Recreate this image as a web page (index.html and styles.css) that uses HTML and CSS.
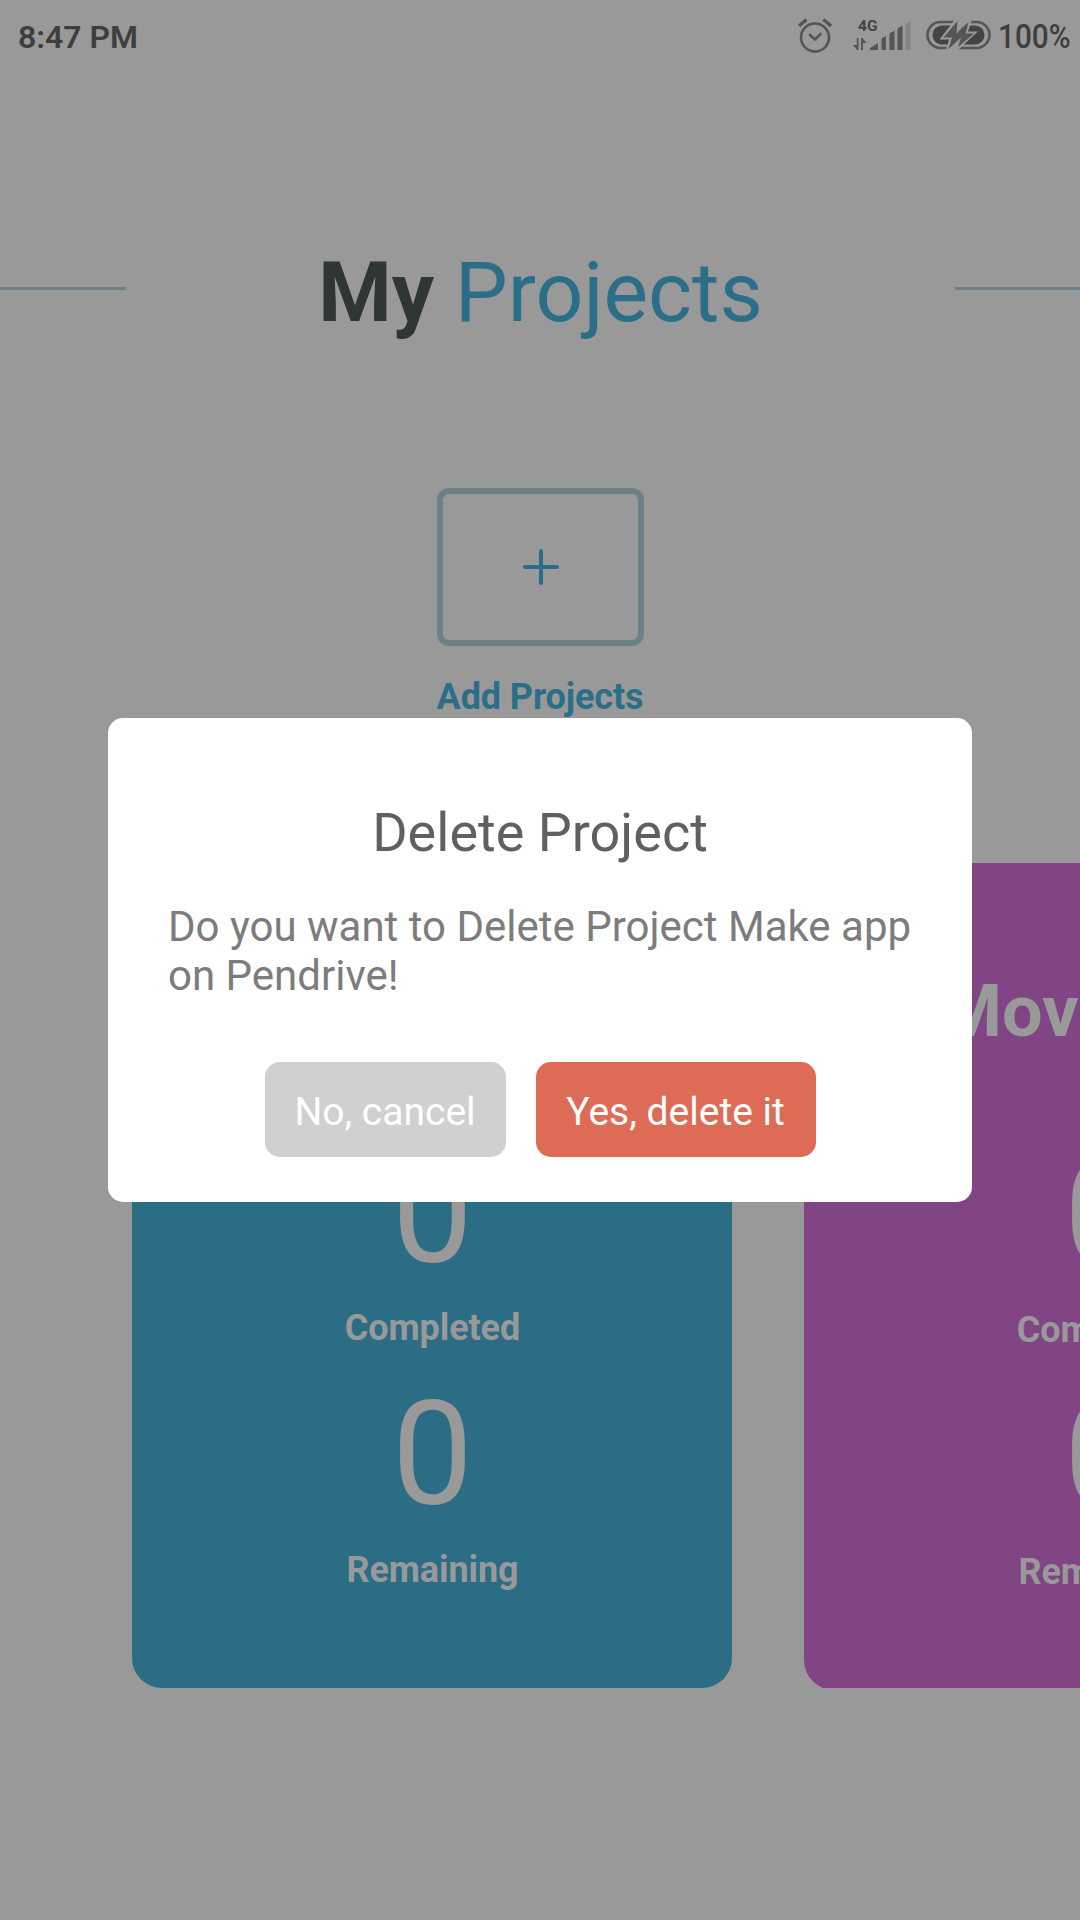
FILE: index.html
```html
<!DOCTYPE html>
<html lang="en">
<head>
<meta charset="utf-8">
<title>My Projects</title>
<link rel="stylesheet" href="styles.css">
</head>
<body>
<div class="screen">
  <header class="status">
    <span class="clock">8:47 PM</span>
    <div class="indicators">
      <svg class="alarm" width="36" height="36" viewBox="0 0 36 36" fill="none" stroke="#555" stroke-width="2.6" stroke-linecap="round" stroke-linejoin="round">
        <circle cx="18" cy="20.500" r="14"/>
        <path d="M13 18l5 4.500 5.500-5.500" stroke-width="2.800"/>
        <path d="M2 9l7.500-6.500M34 9L26.500 2.500" stroke-width="3.400" stroke-linecap="butt"/>
      </svg>
      <div class="signal">
        <span class="network">4G</span>
        <svg class="bars" width="58" height="32" viewBox="0 0 58 32" fill="#555">
          <path d="M3.800 18h1.700v12H4.200L0 25h3.800zM8 18h1.500l4 5H10v7H8z"/>
          <path d="M17 30v-2l8-5v7zM28.500 30V18.500l4.500-2.500v14zM36.500 30V13.500l5-3V30zM44.500 30V8.500l5-3V30z"/>
          <path d="M52.500 30V4l5-3v29z" fill="#848484"/>
        </svg>
      </div>
      <svg class="battery" width="66" height="32" viewBox="0 0 66 32">
        <rect x="1.500" y="3" width="62" height="26" rx="13" fill="none" stroke="#555" stroke-width="2.600"/>
        <rect x="6.500" y="6.500" width="52" height="19" rx="9.500" fill="#444"/>
        <path d="M28.500 1L13.500 20.500h9.500l-3 10.500h12L52 12.500H42L46 1z" fill="#999"/>
        <path d="M31.500 2L17.500 18.500h8.500L22.500 30 35 18.500l-3 9.500L48 14.500h-8.500L42.500 3 30.500 14.500z" fill="#555"/>
        <path d="M26 10.500L21 17h7l-4 11 8.500-8.500M38.500 6l-4.500 7.500h-2" fill="#555"/>
      </svg>
      <span class="percent">100%</span>
    </div>
  </header>

  <main>
    <div class="heading">
      <i class="rule"></i>
      <h1>My <span>Projects</span></h1>
      <i class="rule end"></i>
    </div>

    <div class="add">
      <button class="add-button" aria-label="Add Projects">
        <svg width="36" height="36" viewBox="0 0 36 36" stroke="#2b6e87" stroke-width="4" stroke-linecap="round"><path d="M18 2v32M2 18h32"/></svg>
      </button>
      <span class="add-label">Add Projects</span>
    </div>

    <div class="projects">
      <section class="card blue">
        <h2>Make app</h2>
        <div class="stat"><b>0</b><span>Completed</span></div>
        <div class="stat"><b>0</b><span>Remaining</span></div>
      </section>
      <section class="card purple">
        <h2>Movies to go</h2>
        <div class="stat"><b>0</b><span>Completed</span></div>
        <div class="stat"><b>0</b><span>Remaining</span></div>
      </section>
    </div>
  </main>

  <div class="dialog" role="dialog">
    <h3>Delete Project</h3>
    <p>Do you want to Delete Project Make app on Pendrive!</p>
    <div class="actions">
      <button class="cancel">No, cancel</button>
      <button class="confirm">Yes, delete it</button>
    </div>
  </div>
</div>
</body>
</html>
```

FILE: styles.css
```css
* { box-sizing: border-box; margin: 0; padding: 0; }
body { font-family: Roboto, "Liberation Sans", sans-serif; background: #999; }
button { border: 0; background: none; font: inherit; }
svg { display: block; flex: none; }

.screen { position: relative; width: 1080px; height: 1920px; overflow: hidden; background: #999; }

.status { height: 72px; display: flex; justify-content: space-between; padding: 0 10px 0 18px; color: #3e3e3e; }
.clock { font-size: 32px; font-weight: 600; line-height: 40px; padding-top: 17px; }
.indicators { display: flex; align-items: flex-start; padding-top: 17px; }
.signal { position: relative; width: 58px; height: 36px; margin-left: 20px; }
.bars { margin-top: 3px; }
.network { position: absolute; left: 5px; top: 0; font-size: 15.500px; font-weight: 700; line-height: 18px; color: #444; }
.battery { margin: 2px 6px 0 15px; }
.percent { width: 72px; font-size: 33px; font-weight: 500; line-height: 40px; transform: scaleX(.9); transform-origin: 0 50%; white-space: nowrap; }

.heading { margin-top: 170px; height: 100px; display: flex; justify-content: space-between; align-items: flex-start; }
.heading h1 { font-size: 84px; line-height: 100px; padding-top: 1px; font-weight: 700; color: #303536; white-space: nowrap; }
.heading h1 span { font-weight: 400; color: #2b6e87; }
.rule { width: 126px; height: 3px; margin-top: 45px; background: #6d8088; }
.rule.end { width: 125px; }

.add { margin-top: 146px; display: flex; flex-direction: column; align-items: center; gap: 29px; }
.add-button { width: 207px; height: 158px; padding-left: 1px; border: 6px solid #6d8088; border-radius: 12px; display: flex; align-items: center; justify-content: center; }
.add-label { font-size: 36px; line-height: 44px; font-weight: 700; letter-spacing: -.1px; color: #2b6e87; }

.projects { margin-top: 144px; height: 825px; padding-left: 132px; display: flex; gap: 72px; overflow: hidden; }
.card { flex: none; width: 600px; height: 827px; border-radius: 30px; padding-top: 107px; color: #999; text-align: center; }
.blue { height: 825px; padding-top: 105px; background: #2a6d84; }
.purple { background: #814586; }
.card h2 { font-size: 72px; line-height: 84px; font-weight: 700; margin-bottom: 77px; white-space: nowrap; }
.purple h2 { padding-left: 135px; text-align: left; }
.stat { height: 242px; padding-left: 1px; display: flex; flex-direction: column; gap: 9px; }
.stat b { font-size: 144px; line-height: 168px; font-weight: 400; }
.stat span { font-size: 36px; line-height: 44px; font-weight: 700; letter-spacing: -.1px; }

.dialog { position: absolute; left: 108px; top: 718px; width: 864px; height: 484px; border-radius: 15px; background: #fff; padding: 83px 60px 0; }
.dialog h3 { font-size: 54px; line-height: 64px; font-weight: 400; color: #606060; text-align: center; }
.dialog p { margin-top: 37px; font-size: 42px; line-height: 49px; color: #7c7c7c; }
.actions { display: flex; justify-content: center; gap: 30px; margin-top: 62px; }
.actions button { height: 95px; padding: 4px 0 0; border-radius: 15px; font-size: 39px; color: #fff; white-space: nowrap; }
.actions .cancel { width: 241px; background: #d0d0d0; }
.actions .confirm { width: 280px; background: #dd6b55; }
```
